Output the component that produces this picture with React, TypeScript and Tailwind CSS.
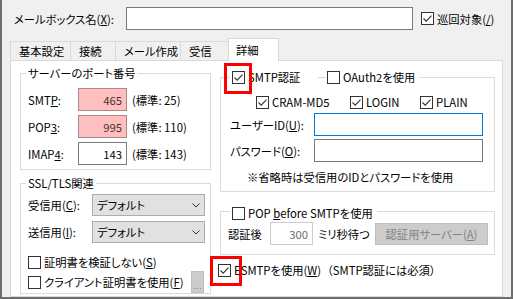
import type { ReactNode } from 'react';

type Mark = 'smtp' | 'esmtp';

function Box({ on, mark }: { on?: boolean; mark?: Mark }) {
  return (
    <span className="relative flex h-[13px] w-[13px] shrink-0 items-center justify-center border border-[#333] bg-white">
      {on && (
        <svg width="11" height="11" viewBox="0 0 11 11">
          <path d="M1.5 5.5 L4.2 8.2 L9.5 2.6" fill="none" stroke="#333" strokeWidth="1.1" />
        </svg>
      )}
      {/* 赤枠の注記 */}
      {mark === 'smtp' && (
        <span className="pointer-events-none absolute -top-[9px] -bottom-[11px] -left-[9px] -right-[8px] border-[3px] border-[#ff0000]" />
      )}
      {mark === 'esmtp' && (
        <span className="pointer-events-none absolute -top-[9px] -bottom-[10px] -left-[9px] -right-[12px] border-[3px] border-[#ff0000]" />
      )}
    </span>
  );
}

function Check({ on, mark, children, className = '' }: { on?: boolean; mark?: Mark; children: ReactNode; className?: string }) {
  return (
    <div className={`flex items-center gap-[3px] ${className}`}>
      <Box on={on} mark={mark} />
      <span className="whitespace-nowrap">{children}</span>
    </div>
  );
}

function Select() {
  return (
    <div className="flex h-[22px] w-[113px] items-center justify-between border border-[#adadad] bg-[#e1e1e1] pl-[4px] pr-[4px]">
      <span>デフォルト</span>
      <svg width="8" height="5" viewBox="0 0 8 5">
        <path d="M0.5 0.5 L4 4 L7.5 0.5" fill="none" stroke="#333" strokeWidth="1" />
      </svg>
    </div>
  );
}

function PortRow({ label, value, std, pink }: { label: ReactNode; value: string; std: string; pink?: boolean }) {
  return (
    <div className="flex h-[23px] items-center">
      <span className="w-[50px]">{label}</span>
      <div
        className={`flex h-full w-[49px] items-center justify-end border pr-[4px] ${
          pink ? 'border-[#a88a8a] bg-[#ffbfbf] text-[#4a2f2f]' : 'border-[#7a7a7a] bg-white'
        }`}
      >
        {value}
      </div>
      <span className="ml-[5px]">(標準: {std})</span>
    </div>
  );
}

export default function App() {
  return (
    <div className="flex h-[299px] w-[513px] flex-col border-b-2 border-l-2 border-r-2 border-[#6e6e6e] bg-[#f0f0f0] font-['Noto_Sans_CJK_JP','Noto_Sans',sans-serif] text-[11.3px] leading-[16px] text-black [font-feature-settings:'palt']">
      {/* メールボックス名 */}
      <div className="flex items-center pl-[12px] pt-[7px]">
        <span className="w-[112px]">
          メールボックス名(<u>X</u>):
        </span>
        <div className="h-[23px] w-[287px] border border-[#7a7a7a] bg-white" />
        <Check on className="ml-[8px]">
          巡回対象(<u>/</u>)
        </Check>
      </div>

      {/* タブ */}
      <div className="relative z-10 -mb-px ml-[8px] mt-[8px] flex items-end">
        {[
          ['基本設定', 'w-[60px]'],
          ['接続', 'w-[45px]'],
          ['メール作成', 'w-[65px]'],
          ['受信', 'w-[48px]'],
        ].map(([t, w]) => (
          <div key={t} className={`mb-px flex h-[19px] items-center whitespace-nowrap border-l border-t border-[#d9d9d9] bg-[#f0f0f0] pl-[8px] ${w}`}>
            {t}
          </div>
        ))}
        <div className="flex h-[23px] w-[51px] items-center border-l border-r border-t border-[#d9d9d9] bg-white pl-[7px]">詳細</div>
      </div>

      {/* 詳細パネル */}
      <div className="ml-[8px] flex w-[493px] flex-1 border border-[#d9d9d9] bg-white">
        {/* 左列 */}
        <div className="ml-[9px] flex w-[191px] shrink-0 flex-col">
          <fieldset className="mt-[4px] border border-[#dcdcdc]">
            <legend className="ml-[5px] px-[2px]">サーバーのポート番号</legend>
            <div className="flex flex-col gap-[4px] pb-[4px] pl-[7px] pt-[7px]">
              <PortRow label={<>SMT<u>P</u>:</>} value="465" std="25" pink />
              <PortRow label={<>POP<u>3</u>:</>} value="995" std="110" pink />
              <PortRow label={<>IMAP<u>4</u>:</>} value="143" std="143" />
            </div>
          </fieldset>

          <fieldset className="mt-[5px] border border-[#dcdcdc]">
            <legend className="ml-[5px] px-[2px]">SSL/TLS関連</legend>
            <div className="flex flex-col pb-px pl-[7px] pt-[3px]">
              <div className="flex h-[22px] items-center">
                <span className="w-[64px]">
                  受信用(<u>C</u>):
                </span>
                <Select />
              </div>
              <div className="mt-[5px] flex h-[22px] items-center">
                <span className="w-[64px]">
                  送信用(<u>I</u>):
                </span>
                <Select />
              </div>
              <div className="mt-[9px] flex h-[20px] items-center">
                <Check>
                  証明書を検証しない(<u>S</u>)
                </Check>
              </div>
              <div className="flex h-[20px] items-center pr-[6px]">
                <Check>
                  クライアント証明書を使用(<u>F</u>)
                </Check>
                <div className="ml-auto flex h-[22px] w-[13px] shrink-0 items-end justify-center border border-[#bfbfbf] bg-[#cccccc] pb-[2px] text-[10px] leading-[10px] text-[#838383]">
                  ...
                </div>
              </div>
            </div>
          </fieldset>
        </div>

        {/* 右列 */}
        <div className="ml-[9px] flex w-[275px] shrink-0 flex-col">
          <fieldset className="mt-[8px] border border-[#dcdcdc]">
            <legend className="ml-[9px] flex h-[16px] items-center pl-[2px] pr-[4px]">
              <Box on mark="smtp" />
              <span className="ml-[3px] w-[70px]">SMTP認証</span>
              <span className="h-px w-[8px] bg-[#dcdcdc]" />
              <Check className="ml-px">OAuth2を使用</Check>
            </legend>
            <div className="flex flex-col pb-[6px] pt-[7px]">
              <div className="flex h-[20px] items-center pl-[35px]">
                <Check on className="w-[94px]">CRAM-MD5</Check>
                <Check on className="w-[70px]">LOGIN</Check>
                <Check on>PLAIN</Check>
              </div>
              <div className="mt-px flex h-[23px] items-center pl-[9px]">
                <span className="w-[84px]">
                  ユーザーID(<u>U</u>):
                </span>
                <div className="h-full w-[169px] border border-[#0078d7] bg-white" />
              </div>
              <div className="mt-[3px] flex h-[23px] items-center pl-[9px]">
                <span className="w-[84px]">
                  パスワード(<u>O</u>):
                </span>
                <div className="h-full w-[169px] border border-[#7a7a7a] bg-white" />
              </div>
              <div className="mt-[7px] pl-[26px]">※省略時は受信用のIDとパスワードを使用</div>
            </div>
          </fieldset>

          <fieldset className="mt-[9px] border border-[#dcdcdc]">
            <legend className="ml-[9px] pl-[2px] pr-[4px] pt-[4px]">
              <Check>
                POP <u>b</u>efore SMTPを使用
              </Check>
            </legend>
            <div className="mb-[9px] mt-px flex h-[23px] items-center pl-[7px]">
              <span className="w-[42px]">認証後</span>
              <div className="flex h-full w-[43px] items-center justify-end border border-[#cccccc] pr-[4px] text-[#6d6d6d]">300</div>
              <span className="ml-[5px] w-[57px] whitespace-nowrap">ミリ秒待つ</span>
              <div className="flex h-[22px] w-[113px] items-center justify-center border border-[#bfbfbf] bg-[#cccccc] text-[#838383]">
                認証用サーバー(<u>A</u>)
              </div>
            </div>
          </fieldset>

          <div className="-ml-[2px] mt-[5px] flex h-[20px] items-center">
            <Check on mark="esmtp">
              ESMTPを使用(<u>W</u>)
            </Check>
            <span className="ml-[6px]">（SMTP認証には必須）</span>
          </div>
        </div>
      </div>
    </div>
  );
}
